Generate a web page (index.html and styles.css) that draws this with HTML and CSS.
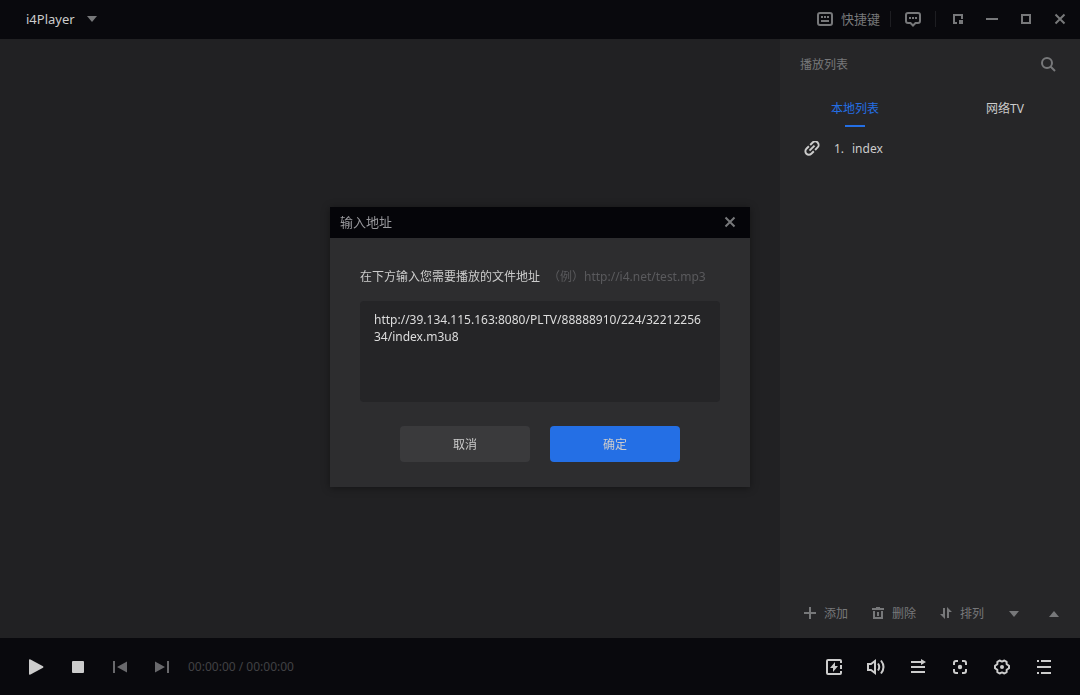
FILE: index.html
```html
<!DOCTYPE html>
<html lang="zh-CN">
<head>
<meta charset="utf-8">
<title>i4Player</title>
<link rel="stylesheet" href="styles.css">
</head>
<body>
<div class="app">
  <header class="titlebar">
    <button class="brand" type="button">i4Player
      <svg class="caret" width="10" height="6" viewBox="0 0 10 6"><path d="M0 0h10L5 6z"/></svg>
    </button>
    <div class="title-tools">
      <button class="shortcut" type="button">
        <svg class="icon" width="16" height="16" viewBox="0 0 16 16"><rect class="line" x="1" y="2" width="14" height="12" rx="2"/><path d="M4 5h2v2H4zM7 5h2v2H7zM10 5h2v2h-2zM4 9h8v2H4z"/></svg>
        快捷键
      </button>
      <span class="divider"></span>
      <button class="tool feedback" type="button" aria-label="反馈">
        <svg class="icon" width="16" height="16" viewBox="0 0 16 16"><path class="line" d="M3 2h10q2 0 2 2v6q0 2-2 2h-2.500l-2.500 2.500L5.500 12H3q-2 0-2-2V4q0-2 2-2z"/><path d="M4 6h2v2H4zM7 6h2v2H7zM10 6h2v2h-2z"/></svg>
      </button>
      <span class="divider"></span>
      <button class="tool mini" type="button" aria-label="迷你模式">
        <svg class="icon" width="16" height="16" viewBox="0 0 16 16"><path d="M3 3h10v5h-2V5H5v6h2v2H3zM9 9h4v4H9z"/></svg>
      </button>
      <button class="tool" type="button" aria-label="最小化">
        <svg class="icon" width="16" height="16" viewBox="0 0 16 16"><path d="M2 7h12v2H2z"/></svg>
      </button>
      <button class="tool" type="button" aria-label="最大化">
        <svg class="icon" width="16" height="16" viewBox="0 0 16 16"><path class="line" d="M4 4h8v8H4z"/></svg>
      </button>
      <button class="tool" type="button" aria-label="关闭">
        <svg class="icon" width="16" height="16" viewBox="0 0 16 16"><path class="line" d="M3.500 3.500l9 9M12.500 3.500l-9 9"/></svg>
      </button>
    </div>
  </header>

  <main class="content">
    <section class="stage" aria-label="视频"></section>
    <aside class="sidebar">
      <div class="side-head">
        <h2 class="side-title">播放列表</h2>
        <button class="tool" type="button" aria-label="搜索">
          <svg class="icon" width="16" height="16" viewBox="0 0 16 16"><circle class="line" cx="7" cy="6" r="5"/><path class="line" d="M10.500 9.500l4.500 4.500"/></svg>
        </button>
      </div>
      <nav class="tabs">
        <button class="tab tab-active" type="button">本地列表</button>
        <button class="tab" type="button">网络TV</button>
      </nav>
      <ol class="playlist">
        <li class="track">
          <svg class="icon" width="16" height="16" viewBox="3 4 18 18"><path transform="rotate(-45 12 12)" d="M4.200 12c0-1.500 1.200-2.800 2.800-2.800h4V7H7a5 5 0 0 0 0 10h4v-2.200H7c-1.600 0-2.800-1.300-2.800-2.800zM8 13.100h8v-2.200H8zM17 7h-4v2.200h4a2.800 2.800 0 0 1 0 5.600h-4V17h4a5 5 0 0 0 0-10z"/></svg>
          <span class="track-no">1.</span>
          <span>index</span>
        </li>
      </ol>
      <div class="side-actions">
        <button class="action" type="button"><svg class="icon" width="14" height="14" viewBox="0 0 14 14"><path d="M6 0h2v5h5v2H8v5H6V7H1V5h5z"/></svg>添加</button>
        <button class="action" type="button"><svg class="icon" width="14" height="14" viewBox="0 0 14 14"><path d="M1 1h4V0h4v1h4v2H1zM2 4h2v6h6V4h2v8H2zM6 5h2v4H6z"/></svg>删除</button>
        <button class="action" type="button"><svg class="icon" width="14" height="14" viewBox="0 0 14 14"><path d="M4 1h2v11L1 7h3zM8 0l5 5h-3v6H8z"/></svg>排列</button>
        <button class="tool" type="button" aria-label="下移"><svg class="caret" width="10" height="6" viewBox="0 0 10 6"><path d="M0 0h10L5 6z"/></svg></button>
        <button class="tool" type="button" aria-label="上移"><svg class="caret" width="10" height="6" viewBox="0 0 10 6"><path d="M0 6h10L5 0z"/></svg></button>
      </div>
    </aside>
  </main>

  <footer class="player">
    <button class="control" type="button" aria-label="播放"><svg class="icon" width="16" height="16" viewBox="0 0 16 16"><path d="M1 1q0-1 1.500-.5L15 7.200q1 .8 0 1.600L2.500 15.500Q1 16 1 15z"/></svg></button>
    <button class="control" type="button" aria-label="停止"><svg class="icon" width="16" height="16" viewBox="0 0 16 16"><rect x="2" y="2" width="12" height="12" rx="1"/></svg></button>
    <button class="control dim" type="button" aria-label="上一个"><svg class="icon" width="16" height="16" viewBox="0 0 16 16"><path d="M1 2h2v12H1zM15 2.500v11L5 8z"/></svg></button>
    <button class="control dim" type="button" aria-label="下一个"><svg class="icon" width="16" height="16" viewBox="0 0 16 16"><path d="M13 2h2v12h-2zM1 2.500v11L11 8z"/></svg></button>
    <span class="time">00:00:00 / 00:00:00</span>
    <div class="player-tools">
      <button class="control" type="button" aria-label="加速"><svg class="icon" width="16" height="16" viewBox="0 0 16 16"><path class="line" d="M15 4V2q0-1-1-1H2Q1 1 1 2v12q0 1 1 1h12q1 0 1-1v-2M15 6v4"/><path d="M9 3v4h3L7 13V9H4z"/></svg></button>
      <button class="control" type="button" aria-label="音量"><svg class="icon" width="20" height="16" viewBox="0 0 20 16"><path class="line" d="M2 5h3l4-3v12l-4-3H2zM12 4.500q2.500 3.500 0 7M15 1.500q5 6.500 0 13"/></svg></button>
      <button class="control" type="button" aria-label="播放顺序"><svg class="icon" width="16" height="16" viewBox="0 0 16 16"><path d="M1 2h10V0l5 3-5 3V4H1zM1 7h14v2H1zM1 12h14v2H1z"/></svg></button>
      <button class="control" type="button" aria-label="截图"><svg class="icon" width="16" height="16" viewBox="0 0 16 16"><path class="line" d="M2 6V4q0-2 2-2h2M10 2h2q2 0 2 2v2M14 10v2q0 2-2 2h-2M6 14H4q-2 0-2-2v-2"/><circle cx="8" cy="8" r="2.200"/></svg></button>
      <button class="control" type="button" aria-label="设置"><svg class="icon" width="16" height="16" viewBox="0 0 16 16"><path class="line" stroke-linejoin="round" d="M15 6.800v2.400L12.700 10.800 12.600 13.200 10.400 14.500 8 13.400 5.600 14.500 3.400 13.200 3.300 10.800 1 9.200V6.800L3.300 5.200 3.400 2.800 5.600 1.500 8 2.600 10.400 1.500 12.600 2.800 12.700 5.200z"/><circle cx="8" cy="8" r="2"/></svg></button>
      <button class="control" type="button" aria-label="播放列表"><svg class="icon" width="16" height="16" viewBox="0 0 16 16"><path d="M1 1h2v2H1zM5 1h10v2H5zM1 7h14v2H1zM1 13h2v2H1zM5 13h10v2H5z"/></svg></button>
    </div>
  </footer>
</div>

<div class="overlay">
  <form class="dialog" role="dialog" aria-labelledby="dialog-title">
    <div class="dialog-head">
      <h1 class="dialog-title" id="dialog-title">输入地址</h1>
      <button class="tool" type="button" aria-label="关闭"><svg class="icon" width="16" height="16" viewBox="0 0 16 16"><path class="line" d="M3.500 3.500l9 9M12.500 3.500l-9 9"/></svg></button>
    </div>
    <div class="dialog-body">
      <div class="prompt"><label for="address">在下方输入您需要播放的文件地址</label><span class="example">（例）http://i4.net/test.mp3</span></div>
      <textarea class="address" id="address" spellcheck="false">http://39.134.115.163:8080/PLTV/88888910/224/3221225634/index.m3u8</textarea>
      <div class="dialog-actions">
        <button class="btn" type="button">取消</button>
        <button class="btn btn-primary" type="submit">确定</button>
      </div>
    </div>
  </form>
</div>
</body>
</html>
```
FILE: styles.css
```css
* { box-sizing: border-box; }

body {
  margin: 0;
  background: #212123;
  color: #cccccc;
  font: 12px/18px "Noto Sans", "Noto Sans CJK SC", sans-serif;
}

button {
  display: flex;
  align-items: center;
  justify-content: center;
  margin: 0;
  padding: 0;
  border: 0;
  background: none;
  color: inherit;
  font: inherit;
  cursor: pointer;
}

svg { display: block; flex: none; }
.icon, .caret { fill: currentColor; }
.line { fill: none; stroke: currentColor; stroke-width: 2; }

.app { display: flex; flex-direction: column; min-height: 100vh; }

.titlebar {
  display: flex;
  align-items: center;
  justify-content: space-between;
  height: 39px;
  padding: 0 3px 1px 26px;
  background: #09090d;
  color: #77787a;
}
.brand { gap: 12px; color: #cccccc; font-size: 13px; }
.brand .caret { color: #77787a; }
.title-tools { display: flex; align-items: center; }
.shortcut { gap: 8px; margin-right: 10px; font-size: 13px; }
.divider { width: 1px; height: 16px; background: #1e1e22; }
.feedback { margin: 0 5px; }
.mini { margin-left: 5px; }
.tool { width: 34px; height: 30px; }

.content { display: flex; flex: 1; }
.stage { flex: 1; background: #212123; }
.sidebar {
  display: flex;
  flex-direction: column;
  width: 300px;
  background: #262628;
}
.side-head {
  display: flex;
  align-items: center;
  justify-content: space-between;
  height: 50px;
  padding: 1px 15px 0 20px;
  color: #77787a;
}
.side-title { margin: 0; font-size: 12px; font-weight: 400; }
.tabs { display: flex; }
.tab {
  position: relative;
  flex: 1;
  height: 38px;
  padding-top: 2px;
}
.tab-active { color: #246fe5; }
.tab-active::after {
  content: "";
  position: absolute;
  bottom: 0;
  width: 20px;
  height: 2px;
  background: #246fe5;
}
.playlist { flex: 1; margin: 0; padding: 0; list-style: none; }
.track {
  display: flex;
  align-items: center;
  height: 43px;
  padding: 0 24px;
}
.track-no { width: 18px; margin-left: 14px; }
.side-actions {
  display: flex;
  align-items: center;
  height: 49px;
  padding: 0 9px 0 23px;
  color: #77787a;
}
.action { gap: 7px; margin-right: 23px; }
.side-actions .tool { margin-right: auto; }
.side-actions .action + .tool { margin-left: -10px; }
.side-actions .tool:last-child { margin: 0; }

.player {
  display: flex;
  align-items: center;
  height: 57px;
  padding: 0 15px;
  background: #09090d;
}
.control { width: 42px; height: 42px; }
.dim { color: #69696c; }
.time { margin-left: 5px; color: #414144; }
.player-tools { display: flex; margin-left: auto; }

.overlay {
  position: fixed;
  inset: 0;
  display: flex;
  align-items: center;
  justify-content: center;
  padding-bottom: 1px;
}
.dialog {
  width: 420px;
  background: #2d2d2f;
  box-shadow: 0 1px 8px rgba(0, 0, 0, 0.4);
}
.dialog-head {
  display: flex;
  align-items: center;
  justify-content: space-between;
  height: 31px;
  padding: 0 3px 1px 10px;
  background: #050509;
  color: #77787a;
}
.dialog-title { margin: 0; color: #9a9a9e; font-size: 13px; font-weight: 400; }
.dialog-body { padding: 30px 30px 25px; }
.prompt { display: flex; gap: 8px; margin-bottom: 15px; }
.example { color: #5a5a5d; }
.address {
  display: block;
  width: 100%;
  height: 101px;
  padding: 10px 14px;
  border: 0;
  border-radius: 4px;
  outline: 0;
  background: #252527;
  color: #dddddd;
  font: 12px/17px "Noto Sans", "Noto Sans CJK SC", sans-serif;
  word-break: break-all;
  resize: none;
}
.dialog-actions {
  display: flex;
  justify-content: center;
  gap: 20px;
  margin-top: 24px;
}
.btn {
  width: 130px;
  height: 36px;
  padding-top: 2px;
  border-radius: 4px;
  background: #3a3a3c;
}
.btn-primary { background: #246fe5; }
```
